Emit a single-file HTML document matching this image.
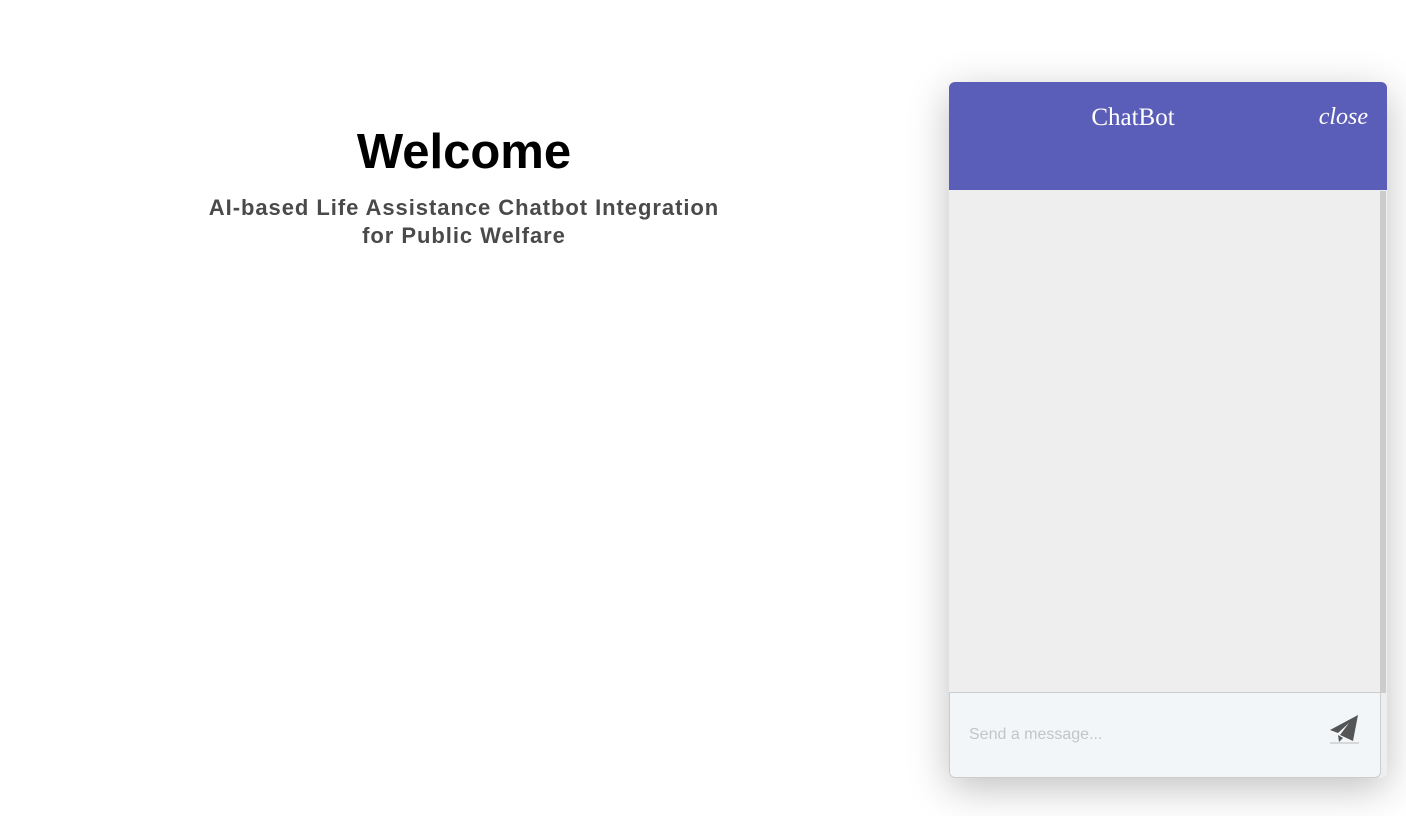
<!DOCTYPE html>
<html><head><style>
body{margin:0;width:1406px;height:816px;background:#fff;font-family:"Liberation Sans",Arial,sans-serif;position:relative;overflow:hidden}
h1{position:absolute;left:164px;width:600px;top:122px;margin:0;text-align:center;font-size:49px;font-weight:bold;color:#000;line-height:60px}
.sub{position:absolute;left:114px;width:700px;top:194px;text-align:center;font-size:22px;letter-spacing:0.95px;font-weight:bold;color:#4a4a4a;line-height:28px}
.panel{position:absolute;left:949px;top:82px;width:438px;height:696px;border-radius:6px;box-shadow:0 10px 40px rgba(0,0,0,0.25);background:#eee;overflow:hidden}
.head{height:108px;background:#5b5eb8;position:relative;color:#fff;font-family:"Liberation Serif",serif}
.title{position:absolute;left:0;width:368px;text-align:center;top:22px;font-size:25px}
.close{position:absolute;right:19px;top:22px;font-size:24px;font-style:italic}
.sb{position:absolute;right:1px;top:109px;width:6px;height:502px;background:#ccc}
.inp{position:absolute;left:0;top:610px;width:430px;height:84px;background:#f3f6f9;border:1px solid #ccc;border-radius:0 0 6px 6px}
.ph{position:absolute;left:19px;top:33px;font-size:16px;color:#c4c4c4}
</style></head><body>
<h1>Welcome</h1>
<div class="sub">AI-based Life Assistance Chatbot Integration<br>for Public Welfare</div>
<div class="panel">
<div class="head"><div class="title">ChatBot</div><div class="close">close</div></div>
<div class="sb"></div>
<div class="inp"><div class="ph">Send a message...</div>
<svg style="position:absolute;left:379px;top:21px" width="31" height="30" viewBox="0 0 31 30">
<path d="M29 1 L1 16 L9 19 L20 9 L11 21 L24 27 Z" fill="#555"/>
<path d="M9 21 L10 28 L14 24 Z" fill="#555"/>
<line x1="1" y1="29" x2="30" y2="29" stroke="#bbb" stroke-width="1"/>
</svg></div>
</div>
</body></html>
